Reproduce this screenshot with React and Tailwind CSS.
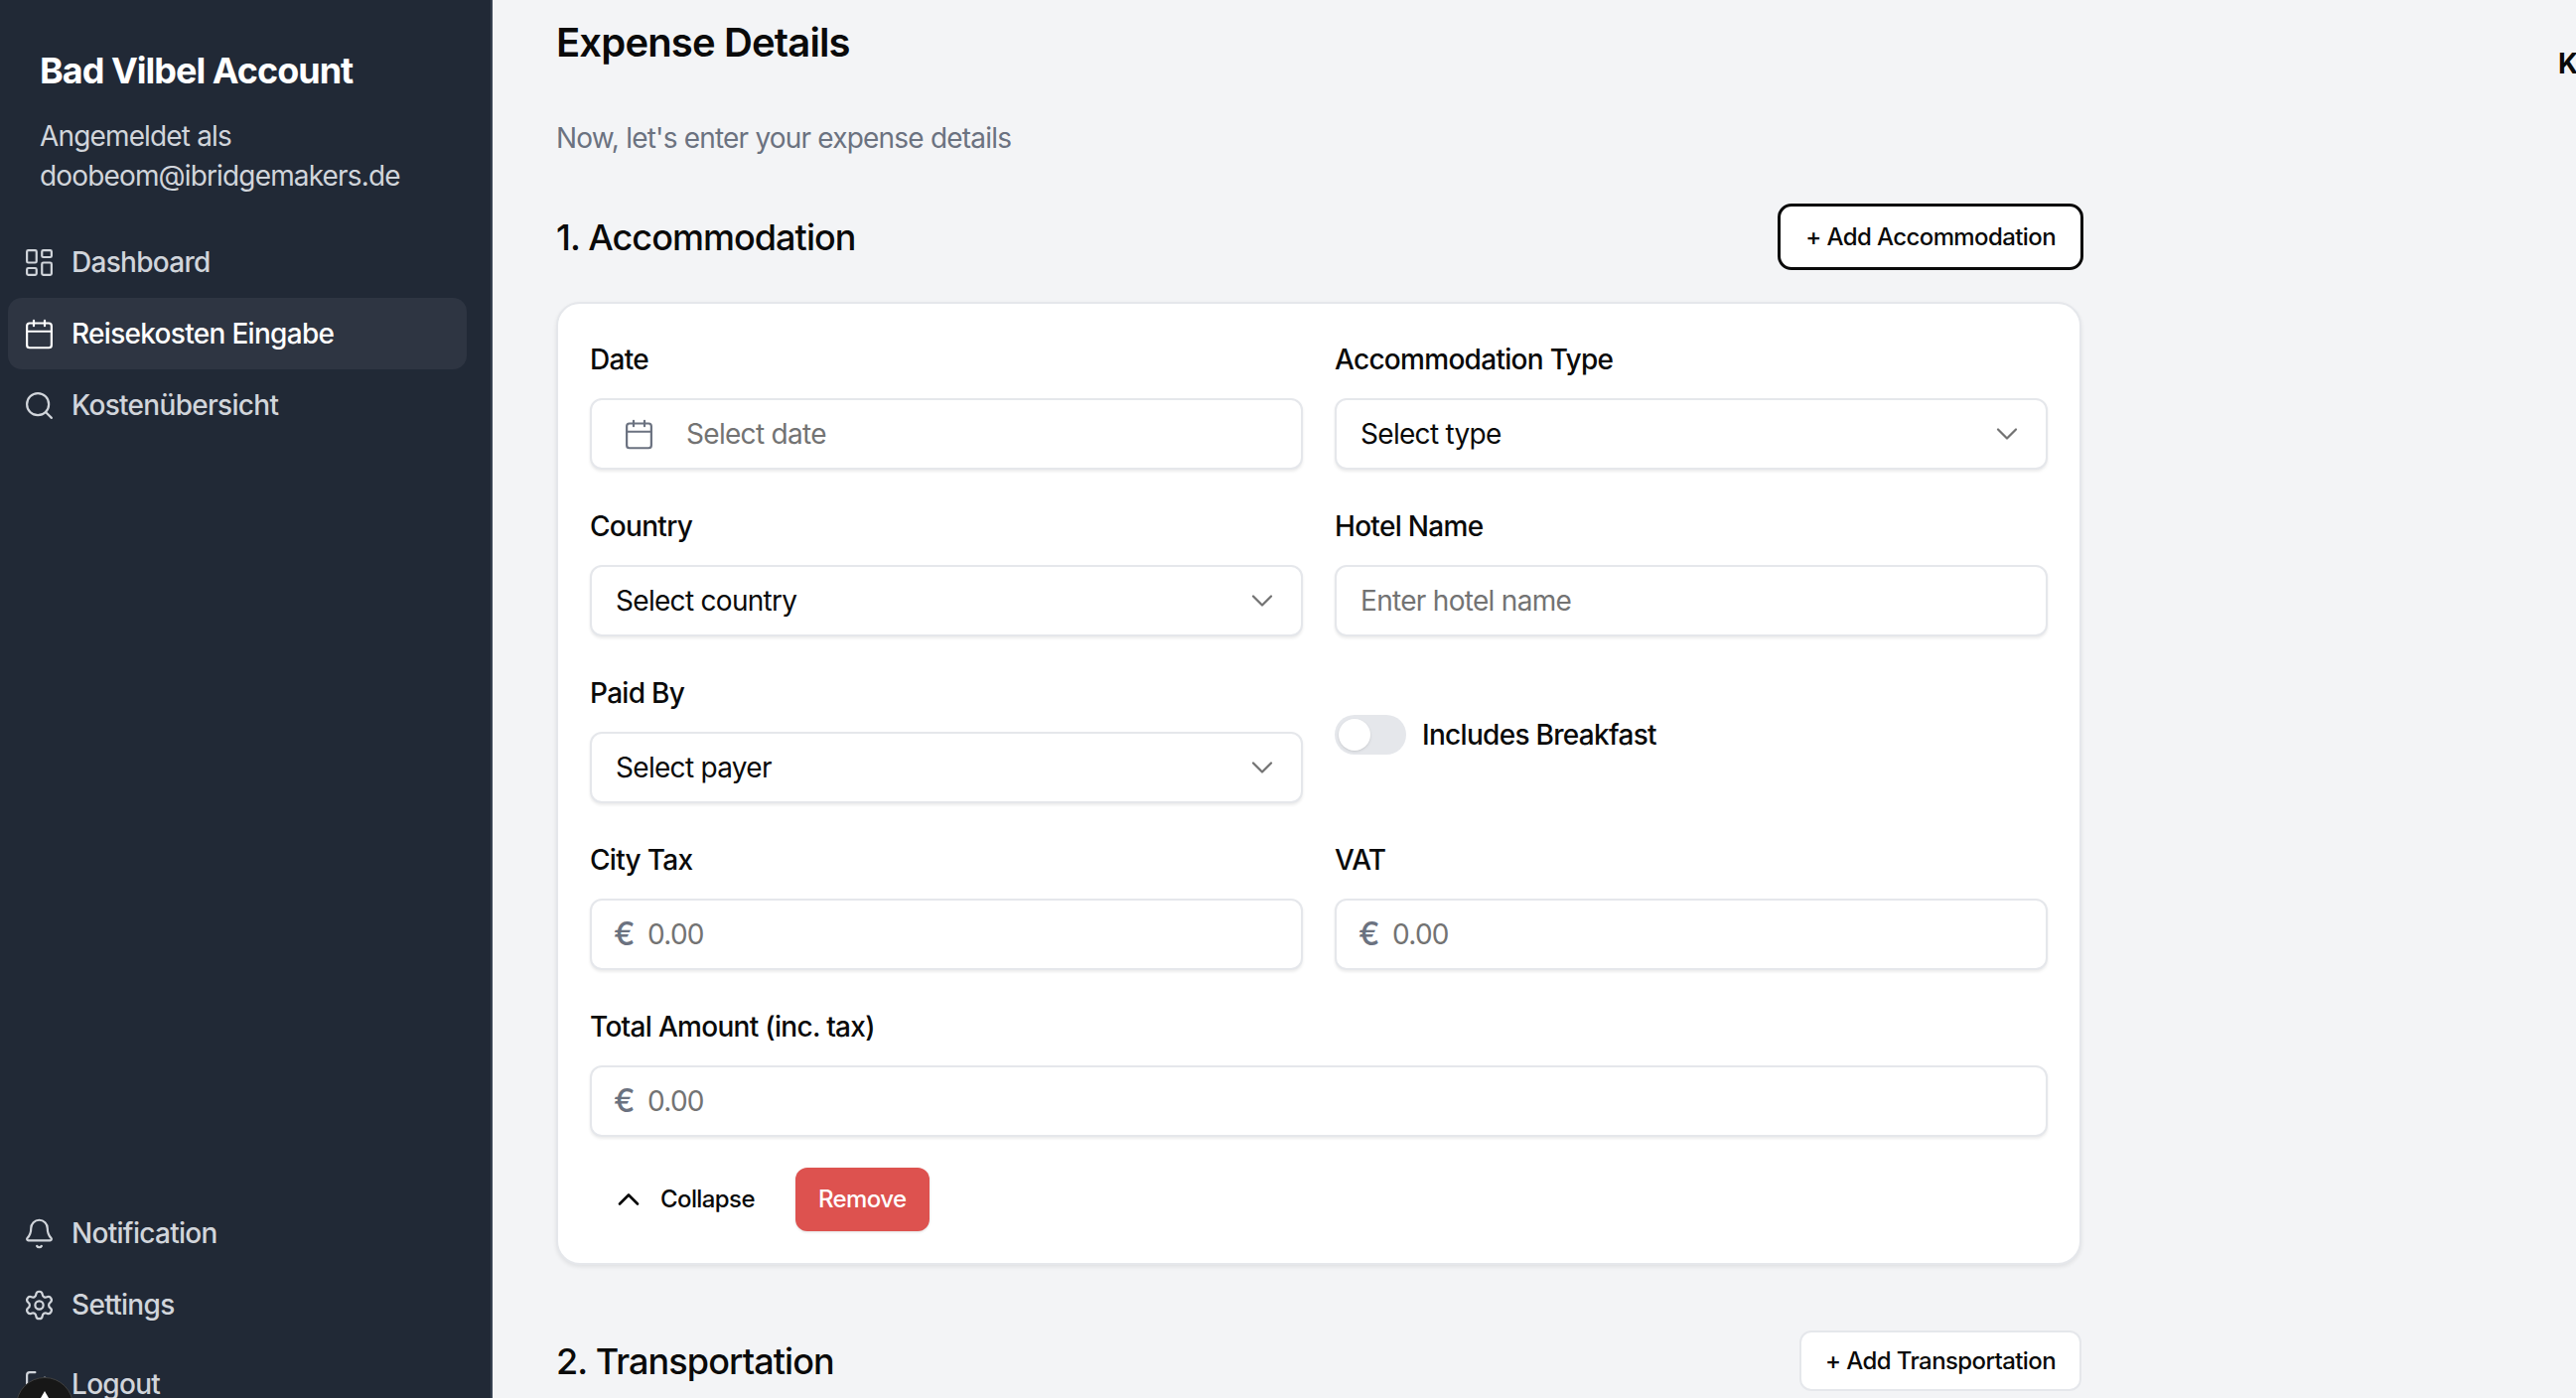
import { Bell, Calendar, ChevronDown, ChevronUp, LayoutDashboard, LogOut, Search, Settings } from "lucide-react";

const NavItem = ({ icon: Icon, label, active }) => (
  <a
    className={`flex items-center h-[72px] pl-[15px] gap-[16px] rounded-[14px] text-[28px] font-medium tracking-tight ${
      active ? "bg-[#2e3542] text-white" : "text-[#d1d5db]"
    }`}
  >
    <Icon size={33} strokeWidth={1.6} className="shrink-0" />
    <span>{label}</span>
  </a>
);

const Label = ({ children }) => (
  <label className="block h-[40px] mb-[20px] leading-[42px] text-[28px] font-medium tracking-tight text-[#0a0a0a]">{children}</label>
);

const boxCls =
  "flex items-center h-[72px] bg-white border-2 border-[#e5e7eb] rounded-[12px] shadow-[0_2px_3px_rgba(0,0,0,0.08)] text-[28px] tracking-tight";

const SelectBox = ({ label, text }) => (
  <div>
    <Label>{label}</Label>
    <div className={`${boxCls} justify-between pl-[24px] pr-[21px] text-[#0a0a0a]`}>
      <span>{text}</span>
      <ChevronDown size={36} strokeWidth={1.5} className="text-[#737373]" />
    </div>
  </div>
);

const MoneyBox = ({ label }) => (
  <div>
    <Label>{label}</Label>
    <div className={`${boxCls} pl-[22px]`}>
      <span className="w-[34px] text-[32px] font-medium text-[#6b7280]">€</span>
      <span className="text-[#737373]">0.00</span>
    </div>
  </div>
);

export default function App() {
  return (
    <div className="relative flex h-screen overflow-hidden bg-[#f3f4f6] font-['Inter',sans-serif]">
      <aside className="flex flex-col shrink-0 w-[496px] h-full overflow-hidden bg-[#212936] border-r-2 border-[#374151]">
        <div className="px-[40px] pt-[48px]">
          <h1 className="text-[36px] leading-[46px] font-bold tracking-[-1px] text-white">Bad Vilbel Account</h1>
          <p className="mt-[23px] text-[28px] leading-[40px] tracking-[-0.85px] text-[#d1d5db]">
            Angemeldet als
            <br />
            doobeom@ibridgemakers.de
          </p>
        </div>
        <nav className="mt-[31px] ml-[8px] mr-[24px]">
          <NavItem icon={LayoutDashboard} label="Dashboard" />
          <NavItem icon={Calendar} label="Reisekosten Eingabe" active />
          <NavItem icon={Search} label="Kostenübersicht" />
        </nav>
        <div className="mt-[762px] ml-[8px] mr-[24px]">
          <NavItem icon={Bell} label="Notification" />
          <NavItem icon={Settings} label="Settings" />
          <div className="mt-[8px]">
            <NavItem icon={LogOut} label="Logout" />
          </div>
        </div>
      </aside>

      <main className="flex flex-1 min-w-0 overflow-hidden pl-[64px]">
        <div className="shrink-0 w-[1536px]">
          <h2 className="pt-[20px] text-[40px] leading-[46px] font-semibold tracking-[-0.85px] text-[#0a0a0a]">Expense Details</h2>
          <p className="mt-[53px] text-[28px] leading-[40px] tracking-[-0.8px] text-[#6b7280]">Now, let's enter your expense details</p>

          <div className="flex items-center justify-between mt-[46px] mr-[-2px]">
            <h3 className="text-[36px] font-medium tracking-[-0.95px] text-[#0a0a0a]">1. Accommodation</h3>
            <button className="h-[67px] px-[25px] bg-white border-[3px] border-[#0a0a0a] rounded-[14px] text-[24px] font-medium tracking-tight text-[#0a0a0a]">
              + Add Accommodation
            </button>
          </div>

          <section className="mt-[32px] px-[32px] pt-[35px] pb-[32px] bg-white border-2 border-[#e5e7eb] rounded-[24px] shadow-[0_2px_4px_rgba(0,0,0,0.08)]">
            <div className="grid grid-cols-2 gap-x-[32px] gap-y-[36px]">
              <div>
                <Label>Date</Label>
                <div className={`${boxCls} pl-[31px] gap-[31px] text-[#737373]`}>
                  <Calendar size={33} strokeWidth={1.6} className="text-[#6b7280]" />
                  <span>Select date</span>
                </div>
              </div>
              <SelectBox label="Accommodation Type" text="Select type" />
              <SelectBox label="Country" text="Select country" />
              <div>
                <Label>Hotel Name</Label>
                <div className={`${boxCls} pl-[24px] text-[#737373]`}>Enter hotel name</div>
              </div>
              <SelectBox label="Paid By" text="Select payer" />
              <div className="flex items-start gap-[16px] pt-[43px]">
                <div className="flex items-center w-[72px] h-[40px] pl-[4px] rounded-full bg-[#e5e7eb]">
                  <div className="w-[32px] h-[32px] rounded-full bg-white shadow-sm" />
                </div>
                <span className="leading-[40px] text-[28px] font-medium tracking-tight text-[#0a0a0a]">Includes Breakfast</span>
              </div>
              <MoneyBox label="City Tax" />
              <MoneyBox label="VAT" />
              <div className="col-span-2">
                <MoneyBox label="Total Amount (inc. tax)" />
              </div>
            </div>
            <div className="flex items-center mt-[31px]">
              <button className="flex items-center gap-[14px] w-[207px] h-[64px] pl-[21px] text-[24px] font-medium tracking-tight text-[#0a0a0a]">
                <ChevronUp size={36} strokeWidth={1.8} />
                Collapse
              </button>
              <button className="h-[64px] px-[23px] bg-[#dd524f] rounded-[12px] shadow-sm text-[24px] font-medium tracking-tight text-white">
                Remove
              </button>
            </div>
          </section>

          <div className="flex items-center justify-between mt-[66px]">
            <h3 className="text-[36px] font-medium tracking-tight text-[#0a0a0a]">2. Transportation</h3>
            <button className="h-[61px] px-[24px] bg-white border-2 border-[#e5e7eb] rounded-[12px] text-[24px] font-medium tracking-tight text-[#0a0a0a]">
              + Add Transportation
            </button>
          </div>
        </div>
        <div className="shrink-0 ml-[480px] pt-[44px] text-[28px] leading-[40px] font-bold whitespace-nowrap text-[#0a0a0a]">
          Kostenübersicht
        </div>
      </main>

      {/* dev tools badge, cut off by the window */}
      <div className="absolute left-[16px] top-[1387px] flex justify-center w-[58px] h-[58px] pt-[13px] rounded-full bg-[#171717] border border-[#3f3f3f]">
        <svg width="16" height="16" viewBox="0 0 16 16">
          <path d="M8 0 L16 14 L0 14 Z" fill="#fff" />
        </svg>
      </div>
    </div>
  );
}
